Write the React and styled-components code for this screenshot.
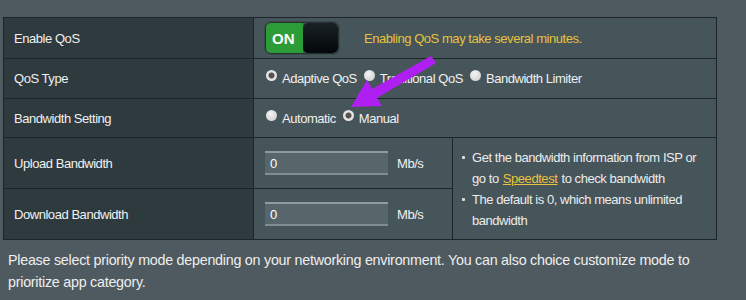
import React from 'react';
import styled, { createGlobalStyle } from 'styled-components';

const GlobalStyle = createGlobalStyle`
  html, body {
    margin: 0;
    padding: 0;
    background: #4e5a60;
  }
  body {
    font-family: "Liberation Sans", Arial, sans-serif;
    color: #ececec;
  }
`;

const Page = styled.div`
  position: relative;
  width: 746px;
  height: 300px;
  padding: 17px 0 0 3px;
  box-sizing: border-box;
  overflow: hidden;
`;

const Table = styled.table`
  border-collapse: collapse;
  width: 714px;
  table-layout: fixed;
  font-size: 13px;
  letter-spacing: -0.45px;
`;

const Row = styled.tr`
  height: ${p => p.h}px;
`;

const Label = styled.th`
  width: 250px;
  background: #2f3a3e;
  border: 1px solid #1c2528;
  text-align: left;
  font-weight: normal;
  padding: 0 0 0 10px;
  color: #f0f0f0;
`;

const Cell = styled.td`
  background: #46555a;
  border: 1px solid #1c2528;
  padding: 0 0 0 11px;
  vertical-align: middle;
`;

const Inline = styled.div`
  display: flex;
  align-items: center;
`;

const Toggle = styled.div`
  display: flex;
  width: 72px;
  height: 30px;
  border-radius: 6px;
  overflow: hidden;
  border: 1px solid #26322f;
  box-shadow: 0 0 0 1px #3b4a4c;
`;

const ToggleOn = styled.div`
  width: 37px;
  background: #2c9c37;
  color: #fff;
  font-weight: bold;
  font-size: 15px;
  letter-spacing: 0;
  display: flex;
  align-items: center;
  padding-left: 6px;
  box-sizing: border-box;
`;

const Knob = styled.div`
  flex: 1;
  background: linear-gradient(#1a2226, #04070a);
  border-radius: 5px;
`;

const Warning = styled.span`
  color: #e8c23e;
  margin-left: 25px;
`;

const RadioLabel = styled.label`
  display: inline-flex;
  align-items: center;
  margin-right: 6px;
  color: #f0f0f0;
`;

const Dot = styled.span`
  display: inline-block;
  width: 11px;
  height: 11px;
  border-radius: 50%;
  margin: -6px 5px 0 1px;
  background: ${p => p.checked
    ? 'radial-gradient(circle, #5a5050 0 2.5px, #e4e4e4 3.5px)'
    : 'radial-gradient(circle at 40% 35%, #f4f4f4, #c8c8c8)'};
`;

const Input = styled.div`
  width: 123px;
  height: 24px;
  box-sizing: border-box;
  background: #56666a;
  border-top: 2px solid #8e9c9f;
  border-bottom: 2px solid #7f8e91;
  color: #fff;
  font-size: 13px;
  padding-left: 5px;
  display: flex;
  align-items: center;
`;

const Unit = styled.span`
  margin-left: 9px;
  color: #f0f0f0;
`;

const HelpCell = styled(Cell)`
  padding: 0 14px 0 8px;
`;

const HelpList = styled.ul`
  margin: 0;
  padding: 0;
  list-style: none;
  line-height: 21px;
`;

const HelpItem = styled.li`
  position: relative;
  padding-left: 11px;
  &::before {
    content: '';
    position: absolute;
    left: 1px;
    top: 9px;
    width: 3px;
    height: 3px;
    border-radius: 1px;
    background: #e0e0e0;
  }
`;

const Link = styled.a`
  color: #e8c23e;
  text-decoration: underline;
  margin: 0 1px;
`;

const Note = styled.p`
  margin: 9px 0 0 5px;
  width: 720px;
  font-size: 14.3px;
  line-height: 22px;
  letter-spacing: -0.25px;
  color: #eeeeee;
`;

const Arrow = styled.svg`
  position: absolute;
  left: 0;
  top: 0;
  pointer-events: none;
`;

function Radio({ checked, children }) {
  return (
    <RadioLabel>
      <Dot checked={checked} />
      {children}
    </RadioLabel>
  );
}

export default function App() {
  return (
    <Page>
      <GlobalStyle />
      <Table>
        <colgroup>
          <col style={{ width: 250 }} />
          <col style={{ width: 199 }} />
          <col />
        </colgroup>
        <tbody>
          <Row h={41}>
            <Label>Enable QoS</Label>
            <Cell colSpan={2}>
              <Inline>
                <Toggle>
                  <ToggleOn>ON</ToggleOn>
                  <Knob />
                </Toggle>
                <Warning>Enabling QoS may take several minutes.</Warning>
              </Inline>
            </Cell>
          </Row>
          <Row h={40}>
            <Label>QoS Type</Label>
            <Cell colSpan={2}>
              <Inline>
                <Radio checked>Adaptive QoS</Radio>
                <Radio>Traditional QoS</Radio>
                <Radio>Bandwidth Limiter</Radio>
              </Inline>
            </Cell>
          </Row>
          <Row h={39}>
            <Label>Bandwidth Setting</Label>
            <Cell colSpan={2}>
              <Inline>
                <Radio>Automatic</Radio>
                <Radio checked>Manual</Radio>
              </Inline>
            </Cell>
          </Row>
          <Row h={51}>
            <Label>Upload Bandwidth</Label>
            <Cell>
              <Inline>
                <Input>0</Input>
                <Unit>Mb/s</Unit>
              </Inline>
            </Cell>
            <HelpCell rowSpan={2}>
              <HelpList>
                <HelpItem>
                  Get the bandwidth information from ISP or go to{' '}
                  <Link>Speedtest</Link> to check bandwidth
                </HelpItem>
                <HelpItem>The default is 0, which means unlimited bandwidth</HelpItem>
              </HelpList>
            </HelpCell>
          </Row>
          <Row h={51}>
            <Label>Download Bandwidth</Label>
            <Cell>
              <Inline>
                <Input>0</Input>
                <Unit>Mb/s</Unit>
              </Inline>
            </Cell>
          </Row>
        </tbody>
      </Table>
      <Note>
        Please select priority mode depending on your networking environment. You can also
        choice customize mode to prioritize app category.
      </Note>
      <Arrow width="746" height="300" viewBox="0 0 746 300">
        <polygon
          points="431,56 372,89 367,80 351,107 382,106 377,98 436,63"
          fill="#b01ff2"
        />
      </Arrow>
    </Page>
  );
}
